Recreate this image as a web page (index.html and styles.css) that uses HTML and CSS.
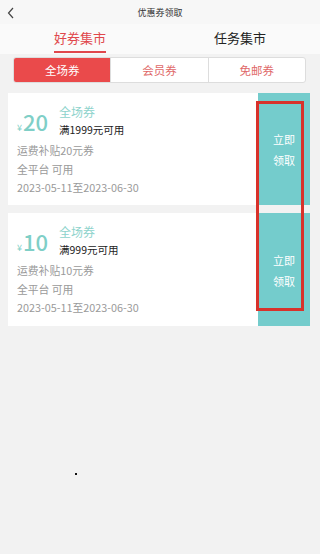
FILE: index.html
```html
<!DOCTYPE html>
<html lang="zh">
<head>
<meta charset="utf-8">
<title>优惠券领取</title>
<link rel="stylesheet" href="styles.css">
</head>
<body>
<div class="page">
  <header class="header">
    <svg class="back" width="8" height="12" viewBox="0 0 8 12"><path d="M6 1 L1.5 6 L6 11" fill="none" stroke="#444" stroke-width="1.2"/></svg>
    <span class="title">优惠券领取</span>
  </header>
  <nav class="tabs">
    <div class="tab active"><span>好券集市</span></div>
    <div class="tab"><span>任务集市</span></div>
  </nav>
  <div class="seg">
    <div class="seg-item on">全场券</div>
    <div class="seg-item">会员券</div>
    <div class="seg-item">免邮券</div>
  </div>
  <div class="list">
    <div class="card">
      <div class="info">
        <div class="top">
          <div class="price"><span class="yen">¥</span><span class="num">20</span></div>
          <div class="cond">
            <div class="kind">全场券</div>
            <div class="min">满1999元可用</div>
          </div>
        </div>
        <div class="line first">运费补贴20元券</div>
        <div class="line">全平台 可用</div>
        <div class="line">2023-05-11至2023-06-30</div>
      </div>
      <div class="btn"><span>立即</span><span>领取</span></div>
    </div>
    <div class="card">
      <div class="info">
        <div class="top">
          <div class="price"><span class="yen">¥</span><span class="num">10</span></div>
          <div class="cond">
            <div class="kind">全场券</div>
            <div class="min">满999元可用</div>
          </div>
        </div>
        <div class="line first">运费补贴10元券</div>
        <div class="line">全平台 可用</div>
        <div class="line">2023-05-11至2023-06-30</div>
      </div>
      <div class="btn"><span>立即</span><span>领取</span></div>
    </div>
    <div class="mark"></div>
  </div>
  <i class="dot"></i>
</div>
</body>
</html>
```
FILE: styles.css
```css
* { box-sizing: border-box; }
html, body { margin: 0; padding: 0; }
body {
  background: #f2f2f2;
  font-family: "Noto Sans CJK SC", "Noto Sans", sans-serif;
  color: #333;
}
.page { position: relative; width: 320px; height: 554px; overflow: hidden; }
.header {
  height: 24px;
  display: flex;
  align-items: center;
  justify-content: center;
  position: relative;
  background: #f7f7f7;
}
.back { position: absolute; left: 7px; top: 7px; }
.title { font-size: 9px; color: #333; }
.tabs {
  display: flex;
  height: 30px;
  background: #fafafa;
}
.tab {
  flex: 1;
  display: flex;
  justify-content: center;
}
.tab span {
  font-size: 13px;
  line-height: 27px;
  color: #222;
  height: 29px;
}
.tab.active span {
  color: #e0474c;
  border-bottom: 2px solid #e0474c;
}
.seg {
  display: flex;
  margin: 3px 14px 0 13px;
  height: 26px;
  border: 1px solid #ddd;
  border-radius: 3px;
  background: #fff;
  overflow: hidden;
}
.seg-item {
  flex: 1;
  display: flex;
  align-items: center;
  justify-content: center;
  font-size: 11.5px;
  color: #e06868;
  border-left: 1px solid #ddd;
}
.seg-item:first-child { border-left: none; }
.seg-item.on { background: #ea4a4b; color: #fff; }
.list {
  position: relative;
  margin: 10px 10px 0 8px;
  display: flex;
  flex-direction: column;
  gap: 8px;
}
.card {
  display: flex;
  height: 112px;
}
.card + .card { height: 113px; }
.info {
  flex: 1;
  background: #fff;
  padding: 10px 0 0 9px;
}
.top { display: flex; align-items: center; }
.price { width: 42px; color: #7fcfc7; display: flex; align-items: baseline; }
.yen { font-size: 9px; margin-right: 1px; }
.num { font-size: 22px; line-height: 24px; font-weight: 500; }
.cond { line-height: 18px; }
.kind { color: #8ed3cc; font-size: 12px; }
.min { color: #222; font-size: 10.5px; }
.line {
  font-size: 10.8px;
  line-height: 18.5px;
  color: #9a9a9a;
}
.line.first { margin-top: 2px; }
.btn {
  width: 52px;
  background: #74cccc;
  display: flex;
  flex-direction: column;
  align-items: center;
  justify-content: center;
  color: #fff;
  font-size: 11px;
  line-height: 21px;
  padding-top: 2px;
}
.mark {
  position: absolute;
  left: 248px;
  top: 8px;
  width: 48px;
  height: 210px;
  border: 3px solid #d8322b;
}
.dot {
  position: absolute;
  left: 75px;
  top: 473px;
  width: 2px;
  height: 2px;
  background: #111;
}
```
